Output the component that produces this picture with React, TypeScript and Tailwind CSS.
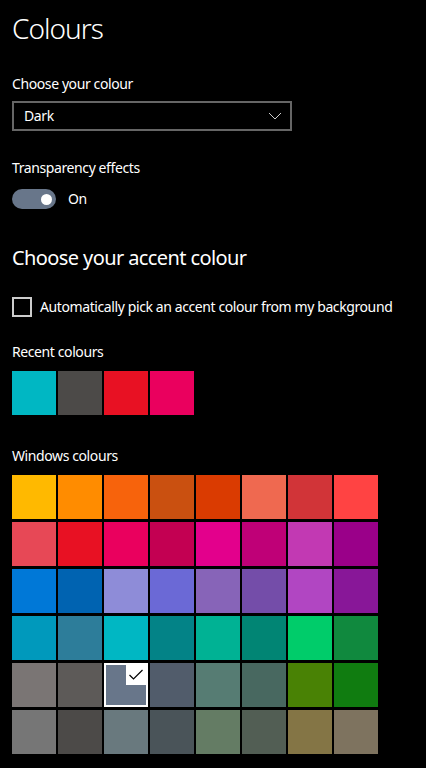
import React from "react";

const recent = ["#00B7C3", "#4C4A48", "#E81123", "#EA005E"];

const windowsColours = [
  ["#FFB900", "#FF8C00", "#F7630C", "#CA5010", "#DA3B01", "#EF6950", "#D13438", "#FF4343"],
  ["#E74856", "#E81123", "#EA005E", "#C30052", "#E3008C", "#BF0077", "#C239B3", "#9A0089"],
  ["#0078D7", "#0063B1", "#8E8CD8", "#6B69D6", "#8764B8", "#744DA9", "#B146C2", "#881798"],
  ["#0099BC", "#2D7D9A", "#00B7C3", "#038387", "#00B294", "#018574", "#00CC6A", "#10893E"],
  ["#7A7574", "#5D5A58", "#68768A", "#515C6B", "#567C73", "#486860", "#498205", "#107C10"],
  ["#767676", "#4C4A48", "#69797E", "#4A5459", "#647C64", "#525E54", "#847545", "#7E735F"],
];

const selected = "#68768A";

function Swatch({ colour, active }: { colour: string; active?: boolean }) {
  if (active) {
    return (
      <div className="relative w-[44px] h-[44px] border-2 border-white" style={{ backgroundColor: colour }}>
        <div className="absolute top-0 right-0 w-[20px] h-[20px] bg-white flex items-center justify-center">
          <svg width="20" height="20" viewBox="0 0 20 20" fill="none">
            <path d="M3.5 10 L7.5 14 L16.5 5" stroke="#000" strokeWidth="1.2" />
          </svg>
        </div>
      </div>
    );
  }
  return <div className="w-[44px] h-[44px]" style={{ backgroundColor: colour }} />;
}

export default function App() {
  return (
    <div className="w-full h-[768px] bg-black text-white px-3 pt-[10px] overflow-hidden tracking-[-0.4px]" style={{ fontFamily: '"Segoe UI", "Noto Sans", sans-serif' }}>
      <h1 className="text-[28px] leading-[36px] font-light tracking-[-1px]">Colours</h1>

      <p className="mt-[28px] text-[14px] leading-[20px]">Choose your colour</p>
      <div className="mt-[7px] w-[280px] h-[30px] border-2 border-[#666666] flex items-center justify-between pl-[10px] pr-[8px]">
        <span className="text-[14px] leading-[20px]">Dark</span>
        <svg width="14" height="8" viewBox="0 0 14 8" fill="none">
          <path d="M1 1 L7 7 L13 1" stroke="#cccccc" strokeWidth="1" />
        </svg>
      </div>

      <p className="mt-[27px] text-[14px] leading-[20px]">Transparency effects</p>
      <div className="mt-[11px] flex items-center gap-3">
        <div className="w-[44px] h-[20px] rounded-full bg-[#68768A] flex items-center justify-end pr-[4px]">
          <div className="w-[11px] h-[11px] rounded-full bg-white" />
        </div>
        <span className="text-[14px] leading-[20px]">On</span>
      </div>

      <h2 className="mt-[35px] text-[20px] leading-[28px] tracking-[-0.6px]">Choose your accent colour</h2>

      <div className="mt-[25px] flex items-center gap-2">
        <div className="w-[20px] h-[20px] border-2 border-[#cccccc]" />
        <span className="text-[14px] leading-[20px]">Automatically pick an accent colour from my background</span>
      </div>

      <p className="mt-[25px] text-[14px] leading-[20px]">Recent colours</p>
      <div className="mt-[9px] flex gap-[2px]">
        {recent.map((c) => (
          <Swatch key={c} colour={c} />
        ))}
      </div>

      <p className="mt-[31px] text-[14px] leading-[20px]">Windows colours</p>
      <div className="mt-[9px] flex flex-col gap-[3px]">
        {windowsColours.map((row, i) => (
          <div key={i} className="flex gap-[2px]">
            {row.map((c) => (
              <Swatch key={c} colour={c} active={c === selected} />
            ))}
          </div>
        ))}
      </div>
    </div>
  );
}
